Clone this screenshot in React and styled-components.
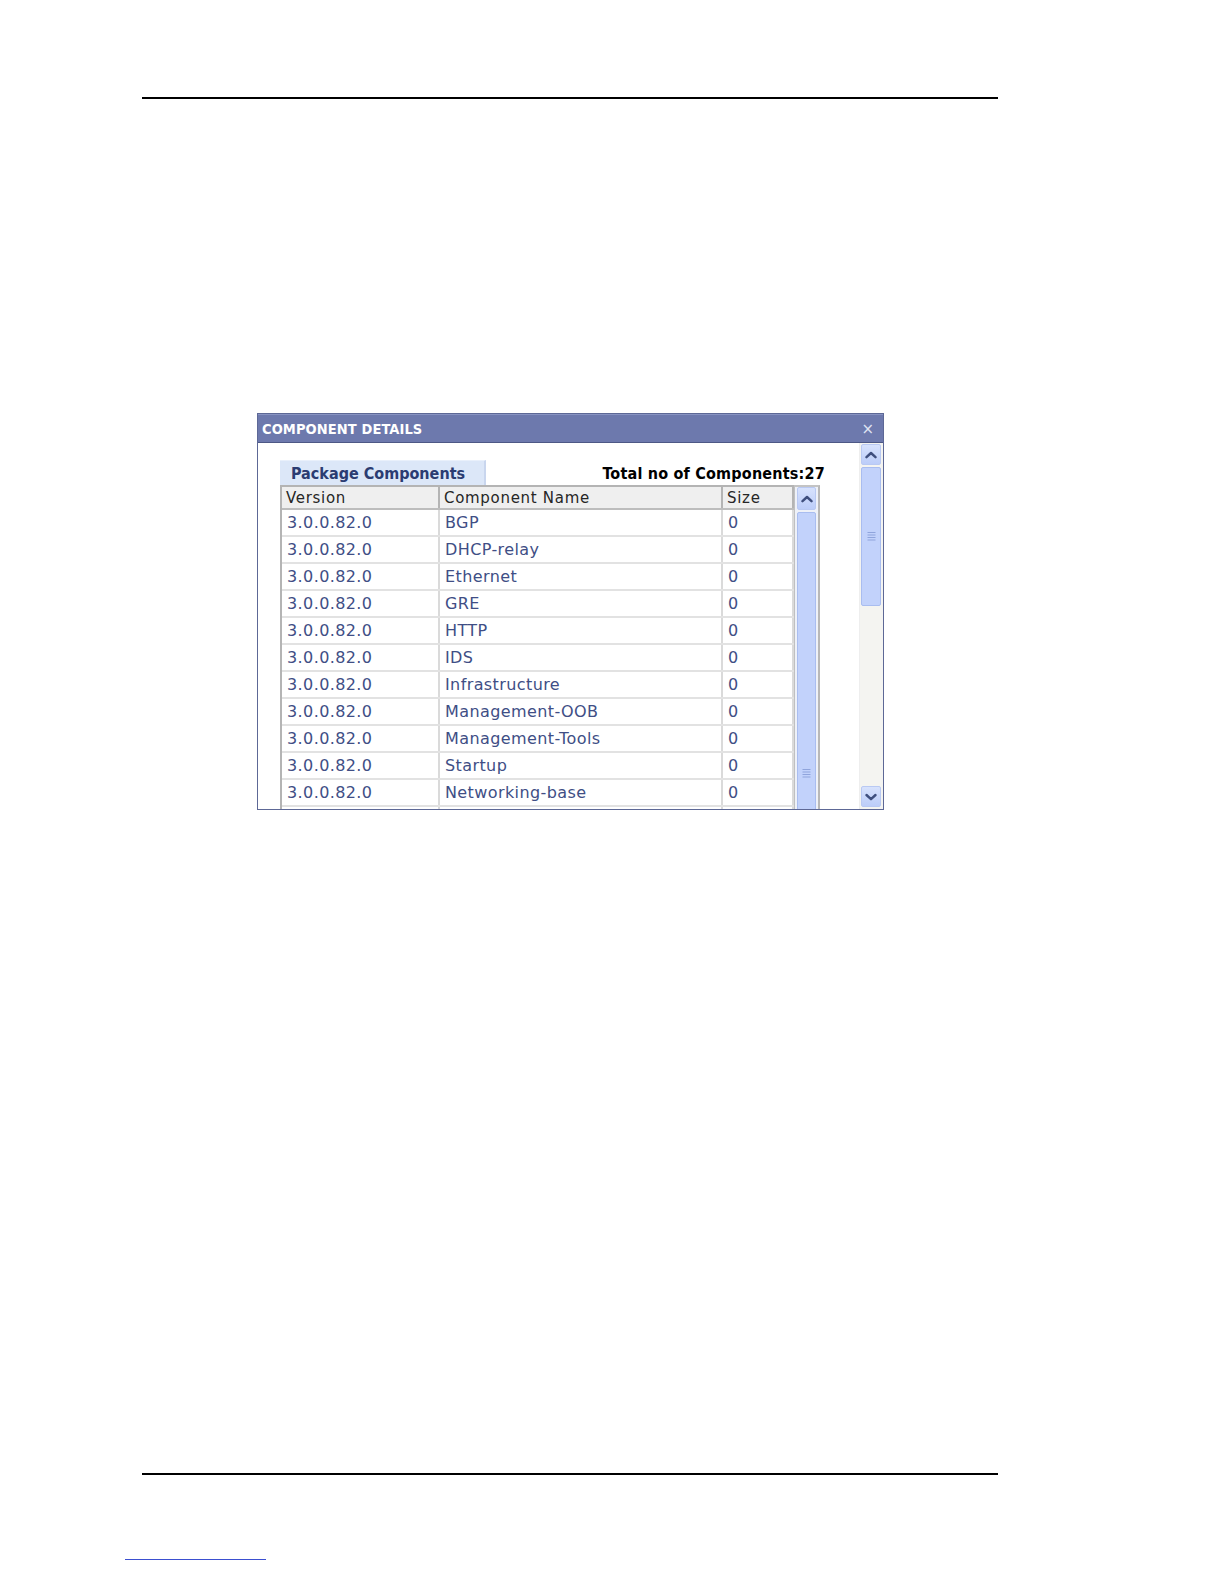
import React from "react";
import styled, { createGlobalStyle } from "styled-components";

const GlobalStyle = createGlobalStyle`
  html, body {
    margin: 0;
    padding: 0;
    background: #ffffff;
    overflow: hidden;
  }
  body {
    font-family: "DejaVu Sans", Verdana, sans-serif;
  }
`;

const Page = styled.div`
  width: 1224px;
  height: 1584px;
  padding-top: 97px;
  box-sizing: border-box;
  display: flex;
  flex-direction: column;
  overflow: hidden;
`;

const Rule = styled.div`
  flex: none;
  margin-left: 142px;
  width: 856px;
  height: 2px;
  background: #000;
  margin-top: ${({ $top }) => $top}px;
`;

const FootLink = styled.div`
  flex: none;
  margin-left: 125px;
  margin-top: 84px;
  width: 141px;
  height: 1px;
  background: #3b4fd0;
`;

const Dialog = styled.div`
  flex: none;
  margin-top: 314px;
  margin-left: 257px;
  width: 627px;
  height: 397px;
  box-sizing: border-box;
  border: 1px solid #5d6896;
  display: flex;
  flex-direction: column;
  background: #fff;
  overflow: hidden;
`;

const TitleBar = styled.div`
  height: 29px;
  flex: none;
  background: #6d79ad;
  border-top: 1px solid #8893c2;
  border-bottom: 1px solid #4d5885;
  box-sizing: border-box;
  display: flex;
  align-items: center;
  justify-content: space-between;
  padding: 0 9px 0 4px;
  color: #fff;
`;

const Title = styled.span`
  font-family: "DejaVu Sans Condensed", "DejaVu Sans", sans-serif;
  font-weight: bold;
  font-size: 14.5px;
  letter-spacing: 0.1px;
`;

const Close = styled.span`
  font-size: 15px;
  color: #dfe3f2;
`;

const Body = styled.div`
  flex: 1;
  display: flex;
  min-height: 0;
  overflow: hidden;
`;

const Content = styled.div`
  flex: 1;
  padding: 17px 0 0 22px;
  overflow: hidden;
`;

const TabRow = styled.div`
  width: 545px;
  display: flex;
  justify-content: space-between;
  align-items: flex-end;
`;

const Tab = styled.div`
  height: 25px;
  width: 206px;
  box-sizing: border-box;
  background: #dce7f8;
  border-top: 1px solid #e9f0fb;
  border-right: 2px solid #c9d6ee;
  padding-left: 11px;
  display: flex;
  align-items: center;
  font-family: "DejaVu Sans Condensed", "DejaVu Sans", sans-serif;
  font-weight: bold;
  font-size: 16px;
  color: #2b3c72;
`;

const Total = styled.div`
  font-family: "DejaVu Sans Condensed", "DejaVu Sans", sans-serif;
  font-weight: bold;
  font-size: 16px;
  letter-spacing: 0.2px;
  color: #000;
  padding-bottom: 2px;
`;

const TableFrame = styled.div`
  width: 540px;
  display: flex;
`;

const Grid = styled.div`
  width: 514px;
  border-left: 2px solid #b4b4b4;
  box-sizing: border-box;
`;

const Row = styled.div`
  display: grid;
  grid-template-columns: 158px 283px 71px;
  height: ${({ $head }) => ($head ? 25 : 27)}px;
  box-sizing: border-box;
  background: ${({ $head }) => ($head ? "#efefef" : "#fff")};
  border-top: ${({ $head }) => ($head ? "2px solid #b4b4b4" : "none")};
  border-bottom: ${({ $head }) => ($head ? "2px solid #bdbdbd" : "2px solid #e2e2e2")};
`;

const Cell = styled.div`
  display: flex;
  align-items: center;
  padding-left: ${({ $head }) => ($head ? 4 : 5)}px;
  border-right: 2px solid ${({ $head }) => ($head ? "#b4b4b4" : "#dadada")};
  font-size: ${({ $head }) => ($head ? 15 : 16)}px;
  letter-spacing: ${({ $head }) => ($head ? 0.7 : 0.4)}px;
  color: ${({ $head }) => ($head ? "#262626" : "#404e85")};
  white-space: nowrap;
  overflow: hidden;
`;

const InnerScroll = styled.div`
  width: 26px;
  box-sizing: border-box;
  border-left: 1px solid #c0c0c0;
  border-right: 2px solid #b8b8b8;
  border-top: 2px solid #c4c4c4;
  padding: 0 2px;
  display: flex;
  flex-direction: column;
  gap: 2px;
  background: #eef1f8;
  overflow: hidden;
`;

const OuterScroll = styled.div`
  width: 24px;
  flex: none;
  padding: 1px 2px 2px 1px;
  box-sizing: border-box;
  display: flex;
  flex-direction: column;
  gap: 2px;
  background: #f4f4f1;
  border-left: 1px solid #eeeeee;
`;

const ArrowButton = styled.div`
  height: ${({ $h }) => $h || 21}px;
  flex: none;
  box-sizing: border-box;
  border: 1px solid #b9c9f3;
  border-radius: 2px;
  background: linear-gradient(#d7e2fd, #bccdf9);
  display: flex;
  align-items: center;
  justify-content: center;
`;

const Thumb = styled.div`
  height: ${({ $h }) => $h}px;
  flex: none;
  box-sizing: border-box;
  border: 1px solid #a9bdf0;
  border-radius: 2px;
  background: #c2d2fb;
  display: flex;
  align-items: ${({ $grip }) => $grip};
  justify-content: center;
  padding: ${({ $pad }) => $pad || "0"};
`;

const Track = styled.div`
  flex: 1;
`;

const Chevron = ({ down }) => (
  <svg width="12" height="8" viewBox="0 0 12 8">
    <path
      d={down ? "M1.5 2 L6 6.2 L10.5 2" : "M1.5 6.2 L6 2 L10.5 6.2"}
      fill="none"
      stroke="#3f4f7e"
      strokeWidth="2.4"
      strokeLinecap="round"
      strokeLinejoin="round"
    />
  </svg>
);

const Grip = () => (
  <svg width="9" height="9" viewBox="0 0 9 9">
    {[1, 3.5, 6, 8.5].map((y) => (
      <line key={y} x1="0.5" x2="8.5" y1={y - 0.5} y2={y - 0.5} stroke="#8fa4dc" strokeWidth="1" />
    ))}
  </svg>
);

const names = [
  "BGP",
  "DHCP-relay",
  "Ethernet",
  "GRE",
  "HTTP",
  "IDS",
  "Infrastructure",
  "Management-OOB",
  "Management-Tools",
  "Startup",
  "Networking-base",
];

export default function App() {
  return (
    <Page>
      <GlobalStyle />
      <Rule $top={0} />
      <Dialog>
        <TitleBar>
          <Title>COMPONENT DETAILS</Title>
          <Close>×</Close>
        </TitleBar>
        <Body>
          <Content>
            <TabRow>
              <Tab>Package Components</Tab>
              <Total>Total no of Components:27</Total>
            </TabRow>
            <TableFrame>
              <Grid>
                <Row $head>
                  <Cell $head>Version</Cell>
                  <Cell $head>Component Name</Cell>
                  <Cell $head>Size</Cell>
                </Row>
                {names.map((n) => (
                  <Row key={n}>
                    <Cell>3.0.0.82.0</Cell>
                    <Cell>{n}</Cell>
                    <Cell>0</Cell>
                  </Row>
                ))}
                <Row>
                  <Cell />
                  <Cell />
                  <Cell />
                </Row>
              </Grid>
              <InnerScroll>
                <ArrowButton $h={23}>
                  <Chevron />
                </ArrowButton>
                <Thumb $h={500} $grip="flex-start" $pad="256px 0 0">
                  <Grip />
                </Thumb>
              </InnerScroll>
            </TableFrame>
          </Content>
          <OuterScroll>
            <ArrowButton>
              <Chevron />
            </ArrowButton>
            <Thumb $h={139} $grip="center">
              <Grip />
            </Thumb>
            <Track />
            <ArrowButton>
              <Chevron down />
            </ArrowButton>
          </OuterScroll>
        </Body>
      </Dialog>
      <Rule $top={663} />
      <FootLink />
    </Page>
  );
}
